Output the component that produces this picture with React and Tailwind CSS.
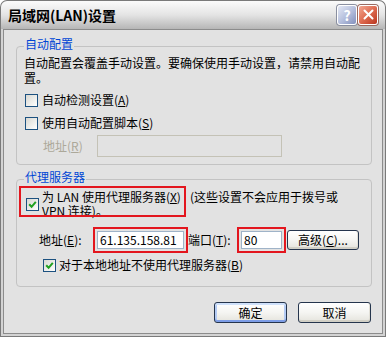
import React from "react";

function Check({ checked, className = "" }) {
  return (
    <span
      className={`flex h-[13px] w-[13px] shrink-0 items-center justify-center border border-[#1c5180] bg-linear-to-br from-[#d8d8d2] to-white ${className}`}
    >
      {checked && (
        <svg width="9" height="9" viewBox="0 0 9 9">
          <path d="M1.2 4.2 L3.6 6.8 L7.8 1.8" fill="none" stroke="#21a121" strokeWidth="2" />
        </svg>
      )}
    </span>
  );
}

function Btn({ children, primary, className = "" }) {
  const look = primary
    ? "shadow-[inset_0_-2px_0_#7d9de6,inset_0_2px_0_#cfe1fb,inset_2px_0_0_#b4cbf4,inset_-2px_0_0_#b4cbf4]"
    : "shadow-[inset_0_-2px_0_#d2d0c6,inset_-1px_0_0_#e2e0d8]";
  return (
    <button
      className={`flex items-center justify-center rounded-[3px] border border-[#25354d] bg-linear-to-b from-white via-[#f5f5f2] to-[#e4e3dc] text-[12px] leading-none text-black ${look} ${className}`}
    >
      {children}
    </button>
  );
}

export default function App() {
  return (
    <div className="flex h-[337px] w-[386px] flex-col bg-white font-['Noto_Sans_CJK_SC','Noto_Sans',sans-serif] text-[12px] text-black">
      {/* title bar */}
      <div className="flex h-[29px] shrink-0 items-center justify-between rounded-t-[7px] border-x border-t border-[#7a7a7a] bg-linear-to-b from-[#fbfbfb] via-[#e4e4e4] to-[#b6b6b6] pb-[1px] pl-[7px] pr-[7px]">
        <span className="text-[14px] font-bold leading-none">局域网(LAN)设置</span>
        <div className="flex gap-[1px]">
          <div className="flex h-[20px] w-[20px] items-center justify-center rounded-[3px] border border-white bg-linear-to-br from-[#e4e8f4] via-[#b7c1de] to-[#8491bd] text-[14px] font-bold leading-none text-white shadow-[0_0_0_1px_#8a8fa0]">
            ?
          </div>
          <div className="flex h-[20px] w-[20px] items-center justify-center rounded-[3px] border border-white bg-linear-to-br from-[#f2a791] via-[#de6b50] to-[#b9331d] shadow-[0_0_0_1px_#9a6a60]">
            <svg width="11" height="11" viewBox="0 0 11 11">
              <path d="M1.5 1.5 L9.5 9.5 M9.5 1.5 L1.5 9.5" stroke="white" strokeWidth="2" strokeLinecap="round" />
            </svg>
          </div>
        </div>
      </div>

      {/* frame */}
      <div className="flex-1 border-x border-b border-[#7a7a7a] bg-[#d3d3d3] px-[2px] pb-[2px]">
        <div className="h-full border border-[#8c8c8c] bg-[#e2e2e2]">
          <fieldset className="ml-[12px] mt-[7px] w-[356px] rounded-[4px] border border-[#c3c3c3] pb-[7px] pl-[7px] pr-[7px]">
            <legend className="px-[1px] pb-[5px] leading-[14px] text-[#0046d5]">自动配置</legend>
            <p className="-mt-[1px] leading-[15px]">
              自动配置会覆盖手动设置。要确保使用手动设置，请禁用自动配置。
            </p>
            <div className="ml-[1px] mt-[6px] flex h-[18px] items-center gap-[4px]">
              <Check />
              <span>
                自动检测设置(<u>A</u>)
              </span>
            </div>
            <div className="ml-[1px] mt-[5px] flex h-[18px] items-center gap-[4px]">
              <Check />
              <span>
                使用自动配置脚本(<u>S</u>)
              </span>
            </div>
            <div className="mt-[3px] flex h-[22px] items-center">
              <span className="ml-[19px] w-[54px] text-[#aca899]">
                地址(<u>R</u>)
              </span>
              <div className="h-[22px] w-[185px] border border-[#c4c2b6] bg-[#e2e2e2]" />
            </div>
          </fieldset>

          <fieldset className="ml-[12px] mt-[5px] w-[356px] rounded-[4px] border border-[#c3c3c3] pb-[12px] pl-[7px] pr-[7px]">
            <legend className="px-[1px] pb-[5px] leading-[14px] text-[#0046d5]">代理服务器</legend>
            <div className="relative -mt-[3px] pl-[2px] pt-[4px]">
              <div className="pointer-events-none absolute left-[-5px] top-0 h-[31px] w-[167px] border-2 border-[#e3161e]" />
              <div className="flex gap-[3px]">
                <Check checked className="mt-[8px]" />
                <p className="leading-[14px]">
                  为 LAN 使用代理服务器(<u>X</u>)<span className="ml-[9px]">(这些设置不会应用于拨号或</span>
                  <br />
                  VPN 连接)。
                </p>
              </div>
            </div>
            <div className="mt-[9px] flex h-[26px] items-center">
              <span className="ml-[15px] w-[54px]">
                地址(<u>E</u>):
              </span>
              <div className="border-2 border-[#e3161e] p-[2px]">
                <div className="h-[18px] w-[87px] border border-[#9fb3c8] bg-white px-[2px] leading-[16px]">
                  61.135.158.81
                </div>
              </div>
              <span className="w-[49px]">
                端口(<u>T</u>):
              </span>
              <div className="border-2 border-[#e3161e] p-[2px]">
                <div className="h-[18px] w-[41px] border border-[#9fb3c8] bg-white px-[2px] leading-[16px]">
                  80
                </div>
              </div>
              <Btn className="ml-[1px] h-[20px] w-[72px]">
                高级(<u>C</u>)...
              </Btn>
            </div>
            <div className="ml-[19px] mt-[3px] flex h-[18px] items-center gap-[3px]">
              <Check checked />
              <span>
                对于本地地址不使用代理服务器(<u>B</u>)
              </span>
            </div>
          </fieldset>

          <div className="ml-[12px] mt-[15px] flex w-[355px] justify-end gap-[11px]">
            <Btn primary className="h-[21px] w-[73px]">
              确定
            </Btn>
            <Btn className="h-[21px] w-[73px]">取消</Btn>
          </div>
        </div>
      </div>
    </div>
  );
}
